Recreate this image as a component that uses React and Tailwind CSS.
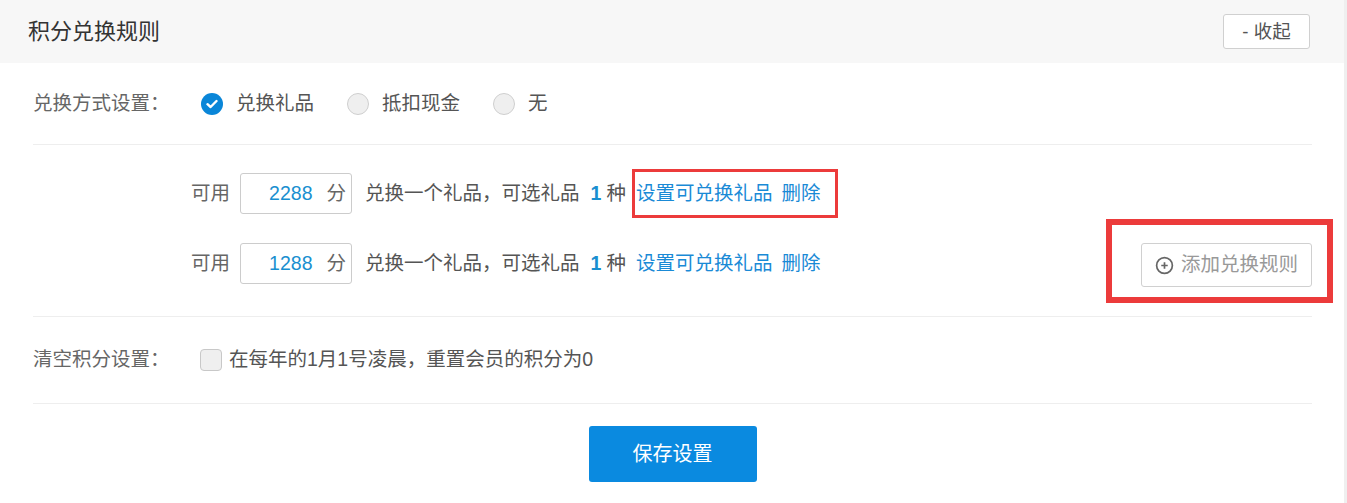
import React from "react";

const font = { fontFamily: '"Liberation Sans", "Noto Sans CJK SC", sans-serif' };

function Radio({ checked, label }) {
  return (
    <label className="flex items-center mr-[33px]">
      {checked ? (
        <span className="w-[22px] h-[22px] rounded-full bg-[#0a86d8] flex items-center justify-center">
          <svg width="12" height="10" viewBox="0 0 12 10">
            <path d="M1.5 5.2 L4.6 8 L10.5 2" fill="none" stroke="#fff" strokeWidth="2.4" strokeLinecap="round" strokeLinejoin="round" />
          </svg>
        </span>
      ) : (
        <span className="w-[22px] h-[22px] rounded-full bg-[#efefef] border border-[#cfcfcf]" />
      )}
      <span className="ml-[13px] text-[#555]">{label}</span>
    </label>
  );
}

function RuleRow({ value, boxed }) {
  return (
    <div className="flex items-center h-[41px]">
      <span className="text-[#666]">可用</span>
      <div className="ml-[10px] w-[112px] h-[41px] border border-[#ccc] rounded-[3px] flex items-center justify-end pr-[5px]">
        <span className="text-[#1a8fd0]">{value}</span>
        <span className="ml-[14px] text-[#666]">分</span>
      </div>
      <span className="ml-[13px] text-[#555]">兑换一个礼品，可选礼品</span>
      <span className="ml-[11px] font-bold text-[#1a8fd0]">1</span>
      <span className="ml-[5px] text-[#555]">种</span>
      <span className="relative ml-[10px] flex items-center">
        <span className="text-[#1a8ad6]">设置可兑换礼品</span>
        <span className="ml-[9px] text-[#1a8ad6]">删除</span>
        {boxed && (
          <span className="absolute left-[-4px] right-[-18px] top-[-10px] bottom-[-10px] border-[3px] border-[#ec3b3b]" />
        )}
      </span>
    </div>
  );
}

export default function App() {
  return (
    <div className="w-[1347px] h-[503px] bg-white flex text-[19.5px] overflow-hidden" style={font}>
      <div className="flex-1 flex flex-col">
        <div className="h-[63px] bg-[#f7f7f7] flex items-center justify-between pl-[28px] pr-[34px]">
          <span className="text-[22px] text-[#333]">积分兑换规则</span>
          <button className="w-[87px] h-[35px] bg-white border border-[#d0d0d0] rounded-[3px] text-[18.5px] text-[#555] flex items-center justify-center">
            - 收起
          </button>
        </div>
        <div className="pl-[33px] pr-[32px] flex flex-col">
          <div className="h-[82px] flex items-center border-b border-[#eee]">
            <span className="w-[168px] text-[#666]">兑换方式设置：</span>
            <Radio checked label="兑换礼品" />
            <Radio label="抵扣现金" />
            <Radio label="无" />
          </div>
          <div className="flex items-end justify-between pl-[158px] pt-[28px] pb-[29px] border-b border-[#eee]">
            <div className="flex flex-col gap-[29px] pb-[3px]">
              <RuleRow value="2288" boxed />
              <RuleRow value="1288" />
            </div>
            <div className="relative">
              <button className="w-[171px] h-[44px] border border-[#d0d0d0] rounded-[3px] bg-white flex items-center justify-center text-[#999]">
                <svg width="19" height="19" viewBox="0 0 20 20" className="mr-[7px]">
                  <circle cx="10" cy="10" r="8.3" fill="none" stroke="#666" strokeWidth="1.8" />
                  <path d="M10 6.6 V13.4 M6.6 10 H13.4" stroke="#666" strokeWidth="1.8" />
                </svg>
                添加兑换规则
              </button>
              <span className="absolute left-[-35px] right-[-21px] top-[-24px] bottom-[-16px] border-[6px] border-[#ec3b3b]" />
            </div>
          </div>
          <div className="h-[87px] flex items-center border-b border-[#eee]">
            <span className="w-[167px] text-[#666]">清空积分设置：</span>
            <span className="w-[22px] h-[22px] rounded-[4px] bg-[#efefef] border border-[#c8c8c8]" />
            <span className="ml-[7px] text-[#555]">在每年的1月1号凌晨，重置会员的积分为0</span>
          </div>
          <div className="pt-[22px] flex justify-center">
            <button className="w-[168px] h-[56px] rounded-[3px] bg-[#0a8ae0] text-white text-[20px]">保存设置</button>
          </div>
        </div>
      </div>
      <div className="w-[3px] bg-[#efefef]" />
    </div>
  );
}
